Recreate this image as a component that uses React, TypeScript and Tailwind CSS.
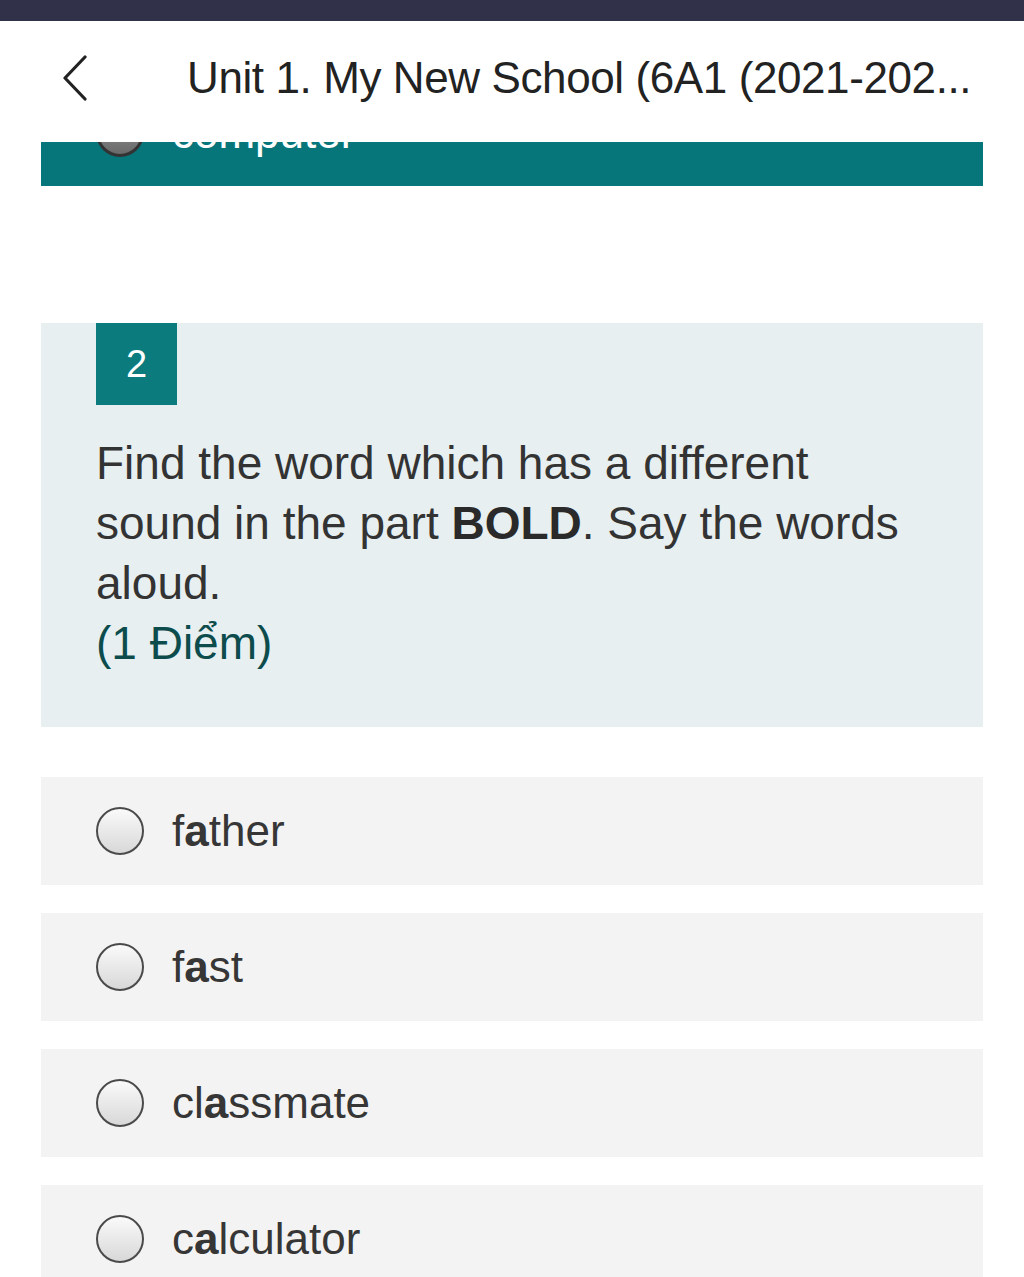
import { ReactNode } from 'react';

const options: { pre: string; bold: string; post: string }[] = [
  { pre: 'f', bold: 'a', post: 'ther' },
  { pre: 'f', bold: 'a', post: 'st' },
  { pre: 'cl', bold: 'a', post: 'ssmate' },
  { pre: 'c', bold: 'a', post: 'lculator' },
];

function Radio({ checked = false }: { checked?: boolean }) {
  return (
    <span
      className={
        checked
          ? 'block w-[48px] h-[48px] rounded-full border-[3px] border-[#333] bg-gradient-to-b from-[#9a9a9a] to-[#6a6a6a] shrink-0'
          : 'block w-[48px] h-[48px] rounded-full border-[2px] border-[#4a4a4a] bg-gradient-to-b from-[#fafafa] to-[#d8d8d8] shrink-0'
      }
    />
  );
}

function OptionRow({ children }: { children: ReactNode }) {
  return (
    <div className="bg-[#f3f3f3] h-[108px] flex items-center pl-[55px] gap-[28px]">
      <Radio />
      <span className="text-[44px] text-[#363636]">{children}</span>
    </div>
  );
}

export default function App() {
  return (
    <div className="w-[1024px] h-[1277px] overflow-hidden bg-white font-['Liberation_Sans',Arial,sans-serif]">
      <div className="h-[21px] bg-[#31324a]" />

      {/* header */}
      <div className="h-[121px] flex items-center relative z-10 bg-white pb-[8px]">
        <svg className="ml-[62px] w-[26px] h-[46px]" viewBox="0 0 26 46" fill="none">
          <polyline points="23,2 3,23 23,44" stroke="#222" strokeWidth="3.2" strokeLinecap="round" strokeLinejoin="round" />
        </svg>
        <h1 className="ml-[99px] text-[44px] text-[#222] tracking-[-0.4px] whitespace-nowrap">
          Unit 1. My New School (6A1 (2021-202...
        </h1>
      </div>

      {/* previous question, selected option scrolled under header */}
      <div className="mx-[41px] h-[44px] bg-[#07767a] overflow-hidden">
        <div className="flex items-center gap-[28px] pl-[55px] h-[48px] mt-[-33px]">
          <Radio checked />
          <span className="text-[44px] text-white">computer</span>
        </div>
      </div>

      {/* question card */}
      <div className="mx-[41px] mt-[137px] bg-[#e7eff1] h-[404px] pl-[55px]">
        <div className="w-[81px] h-[82px] bg-[#0b7b7e] text-white text-[38px] flex items-center justify-center">
          2
        </div>
        <p className="mt-[28px] text-[46px] leading-[60px] text-[#333] pr-[60px]">
          Find the word which has a different sound in the part <b className="text-[#2a2a2a]">BOLD</b>. Say the words aloud.
          <br />
          <span className="text-[#0d4c4c]">(1 Điểm)</span>
        </p>
      </div>

      {/* options */}
      <div className="mx-[41px] mt-[50px] flex flex-col gap-[28px]">
        {options.map((o, i) => (
          <OptionRow key={i}>
            {o.pre}
            <b>{o.bold}</b>
            {o.post}
          </OptionRow>
        ))}
      </div>
    </div>
  );
}
